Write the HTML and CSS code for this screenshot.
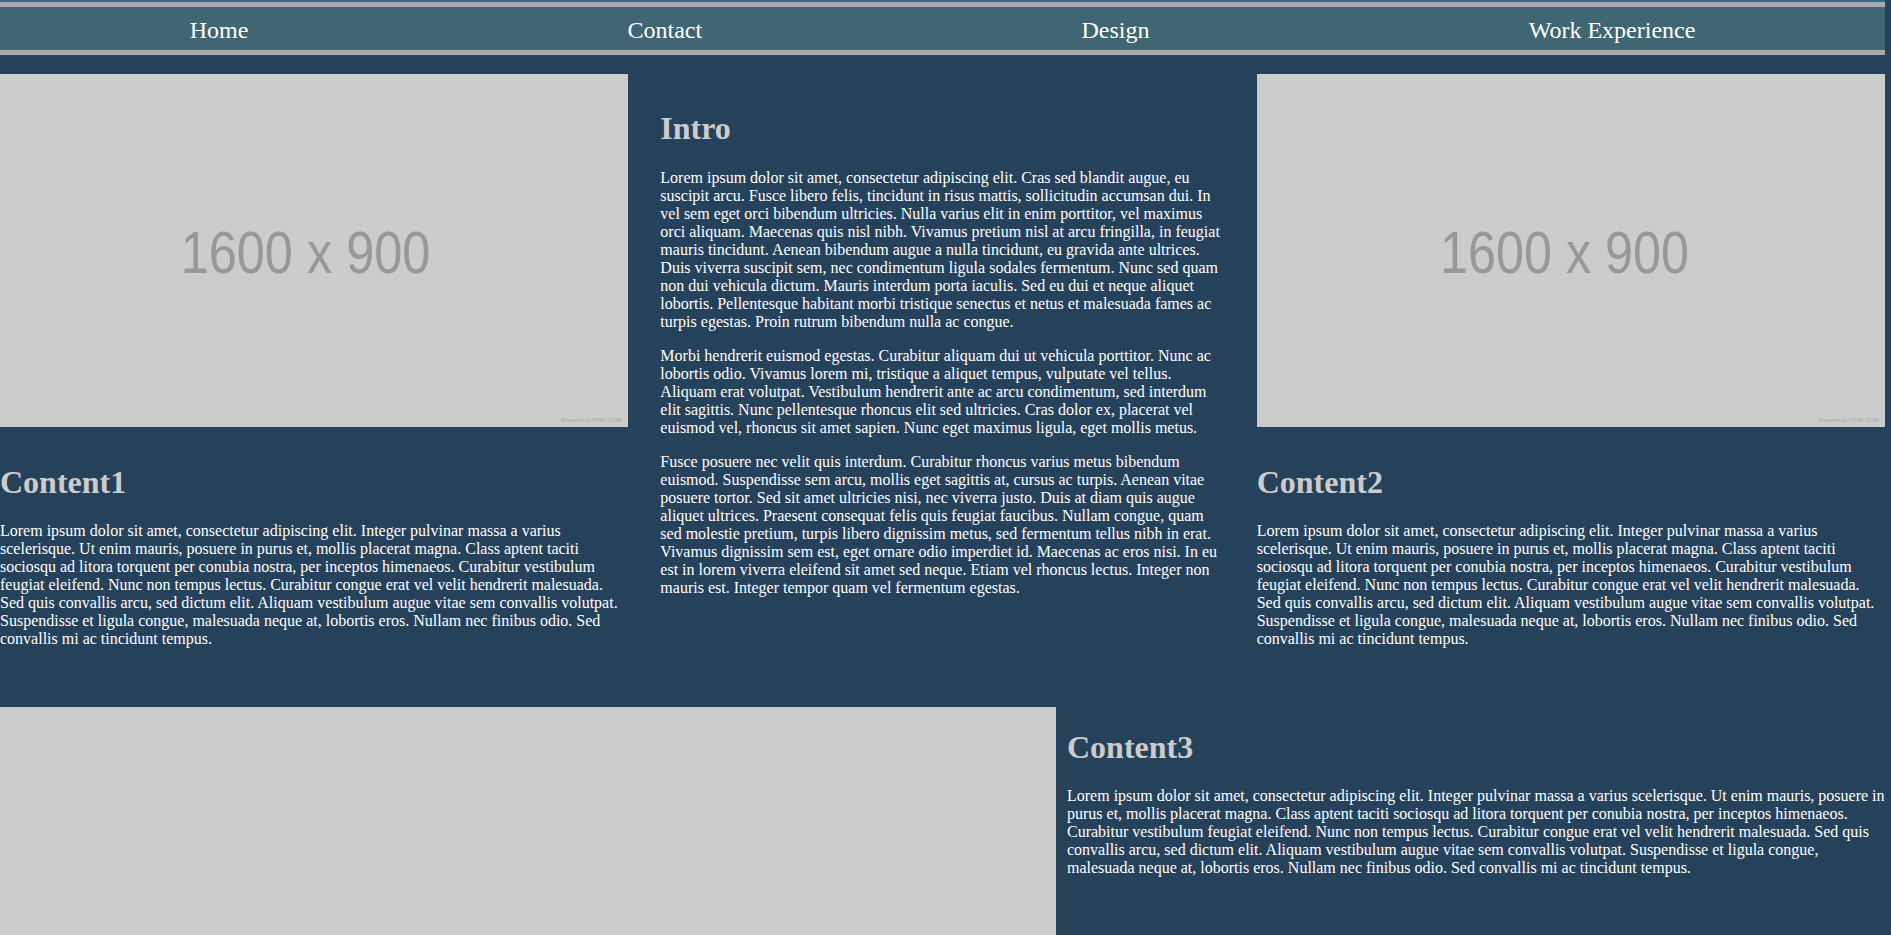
FILE: index.html
```html
<!DOCTYPE html>
<html lang="en">
<head>
<meta charset="utf-8">
<title>Portfolio</title>
<link rel="stylesheet" href="styles.css">
</head>
<body>
<div class="page">
  <header class="site-header">
    <nav class="nav">
      <a href="#" class="nav-link">Home</a>
      <a href="#" class="nav-link">Contact</a>
      <a href="#" class="nav-link">Design</a>
      <a href="#" class="nav-link">Work Experience</a>
    </nav>
  </header>
  <main class="main">
    <section class="top-row">
      <div class="col">
        <svg class="ph" viewBox="0 0 1600 900" preserveAspectRatio="none">
          <rect class="ph-bg" width="1600" height="900"/>
          <text class="ph-size" x="460" y="506" textLength="636" lengthAdjust="spacingAndGlyphs">1600 x 900</text>
          <text class="ph-credit" x="1430" y="886" textLength="153" lengthAdjust="spacingAndGlyphs">Powered by HTML.COM</text>
        </svg>
        <div class="text">
          <h1>Content1</h1>
          <p>Lorem ipsum dolor sit amet, consectetur adipiscing elit. Integer pulvinar massa a varius scelerisque. Ut enim mauris, posuere in purus et, mollis placerat magna. Class aptent taciti sociosqu ad litora torquent per conubia nostra, per inceptos himenaeos. Curabitur vestibulum feugiat eleifend. Nunc non tempus lectus. Curabitur congue erat vel velit hendrerit malesuada. Sed quis convallis arcu, sed dictum elit. Aliquam vestibulum augue vitae sem convallis volutpat. Suspendisse et ligula congue, malesuada neque at, lobortis eros. Nullam nec finibus odio. Sed convallis mi ac tincidunt tempus.</p>
        </div>
      </div>
      <div class="col">
        <div class="text text-mid">
          <h1>Intro</h1>
          <p>Lorem ipsum dolor sit amet, consectetur adipiscing elit. Cras sed blandit augue, eu suscipit arcu. Fusce libero felis, tincidunt in risus mattis, sollicitudin accumsan dui. In vel sem eget orci bibendum ultricies. Nulla varius elit in enim porttitor, vel maximus orci aliquam. Maecenas quis nisl nibh. Vivamus pretium nisl at arcu fringilla, in feugiat mauris tincidunt. Aenean bibendum augue a nulla tincidunt, eu gravida ante ultrices. Duis viverra suscipit sem, nec condimentum ligula sodales fermentum. Nunc sed quam non dui vehicula dictum. Mauris interdum porta iaculis. Sed eu dui et neque aliquet lobortis. Pellentesque habitant morbi tristique senectus et netus et malesuada fames ac turpis egestas. Proin rutrum bibendum nulla ac congue.</p>
          <p>Morbi hendrerit euismod egestas. Curabitur aliquam dui ut vehicula porttitor. Nunc ac lobortis odio. Vivamus lorem mi, tristique a aliquet tempus, vulputate vel tellus. Aliquam erat volutpat. Vestibulum hendrerit ante ac arcu condimentum, sed interdum elit sagittis. Nunc pellentesque rhoncus elit sed ultricies. Cras dolor ex, placerat vel euismod vel, rhoncus sit amet sapien. Nunc eget maximus ligula, eget mollis metus.</p>
          <p>Fusce posuere nec velit quis interdum. Curabitur rhoncus varius metus bibendum euismod. Suspendisse sem arcu, mollis eget sagittis at, cursus ac turpis. Aenean vitae posuere tortor. Sed sit amet ultricies nisi, nec viverra justo. Duis at diam quis augue aliquet ultrices. Praesent consequat felis quis feugiat faucibus. Nullam congue, quam sed molestie pretium, turpis libero dignissim metus, sed fermentum tellus nibh in erat. Vivamus dignissim sem est, eget ornare odio imperdiet id. Maecenas ac eros nisi. In eu est in lorem viverra eleifend sit amet sed neque. Etiam vel rhoncus lectus. Integer non mauris est. Integer tempor quam vel fermentum egestas.</p>
        </div>
      </div>
      <div class="col">
        <svg class="ph" viewBox="0 0 1600 900" preserveAspectRatio="none">
          <rect class="ph-bg" width="1600" height="900"/>
          <text class="ph-size" x="466" y="506" textLength="634" lengthAdjust="spacingAndGlyphs">1600 x 900</text>
          <text class="ph-credit" x="1430" y="886" textLength="153" lengthAdjust="spacingAndGlyphs">Powered by HTML.COM</text>
        </svg>
        <div class="text">
          <h1>Content2</h1>
          <p>Lorem ipsum dolor sit amet, consectetur adipiscing elit. Integer pulvinar massa a varius scelerisque. Ut enim mauris, posuere in purus et, mollis placerat magna. Class aptent taciti sociosqu ad litora torquent per conubia nostra, per inceptos himenaeos. Curabitur vestibulum feugiat eleifend. Nunc non tempus lectus. Curabitur congue erat vel velit hendrerit malesuada. Sed quis convallis arcu, sed dictum elit. Aliquam vestibulum augue vitae sem convallis volutpat. Suspendisse et ligula congue, malesuada neque at, lobortis eros. Nullam nec finibus odio. Sed convallis mi ac tincidunt tempus.</p>
        </div>
      </div>
    </section>
    <section class="bottom-row">
      <div class="map"></div>
      <div class="text3">
        <h1>Content3</h1>
        <p>Lorem ipsum dolor sit amet, consectetur adipiscing elit. Integer pulvinar massa a varius scelerisque. Ut enim mauris, posuere in purus et, mollis placerat magna. Class aptent taciti sociosqu ad litora torquent per conubia nostra, per inceptos himenaeos. Curabitur vestibulum feugiat eleifend. Nunc non tempus lectus. Curabitur congue erat vel velit hendrerit malesuada. Sed quis convallis arcu, sed dictum elit. Aliquam vestibulum augue vitae sem convallis volutpat. Suspendisse et ligula congue, malesuada neque at, lobortis eros. Nullam nec finibus odio. Sed convallis mi ac tincidunt tempus.</p>
      </div>
    </section>
  </main>
</div>
</body>
</html>
```

FILE: styles.css
```css
html, body {
  margin: 0;
  padding: 0;
  background: #26415a;
  overflow: hidden;
}

body {
  font-family: "Liberation Serif", "Times New Roman", serif;
  font-size: 16px;
  color: #ffffff;
}

.page {
  margin-right: 6px;
}

.site-header {
  border-top: 2px solid #2b6b8c;
}

.nav {
  display: flex;
  justify-content: space-around;
  align-items: flex-start;
  background: #406573;
  border-top: 5px solid #aaaaaa;
  border-bottom: 5px solid #aaaaaa;
  height: 33px;
  padding-top: 10px;
}

.nav-link {
  color: #ffffff;
  font-size: 24px;
  text-decoration: none;
}

.main {
  padding-top: 19px;
}

.top-row {
  display: grid;
  grid-template-columns: repeat(3, 1fr);
}

.col {
  min-width: 0;
}

.ph {
  display: block;
  width: 100%;
  aspect-ratio: 16 / 9;
  height: auto;
}

.ph-bg {
  fill: #cccccc;
}

.ph-size {
  font-family: "Liberation Sans", Arial, sans-serif;
  font-size: 152px;
  fill: #989898;
}

.ph-credit {
  font-family: "Liberation Sans", Arial, sans-serif;
  font-size: 15px;
  fill: #a9a9a9;
}

.text {
  padding-top: 15px;
}

.text-mid {
  padding-left: 32px;
  padding-right: 32px;
}

h1 {
  font-size: 32px;
  font-weight: bold;
  color: #cccccc;
  margin: 21.44px 0;
}

p {
  margin: 16px 0;
}

.bottom-row {
  display: flex;
  margin-top: 43px;
}

.map {
  flex: 0 0 1056px;
  height: 320px;
  background: #cccccc;
}

.text3 {
  flex: 1;
  min-width: 0;
  padding-left: 11px;
}
```
